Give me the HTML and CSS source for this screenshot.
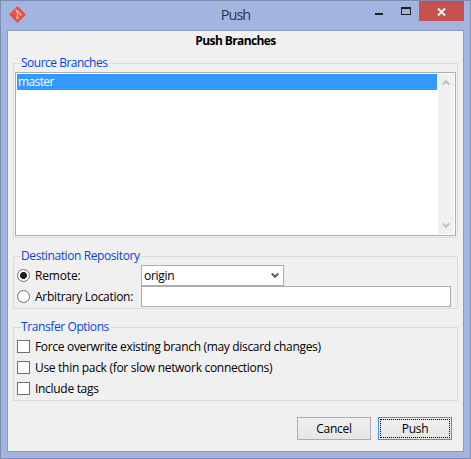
FILE: index.html
```html
<!DOCTYPE html>
<html lang="en">
<head>
<meta charset="utf-8">
<title>Push</title>
<link rel="stylesheet" href="styles.css">
</head>
<body>
<div class="window">
  <header class="titlebar">
    <svg class="logo" width="17" height="17" viewBox="0 0 17 17">
      <path d="M8.5 1 16 8.5 8.5 16 1 8.5Z" fill="#f05133" stroke="#f05133" stroke-width="1.4" stroke-linejoin="round"/>
      <path d="M6.3 3.2 8.4 5.3V12M8.6 5.5 11.2 8.2" fill="none" stroke="#d3bfd0" stroke-width="1.1"/>
      <circle cx="8.4" cy="5.5" r="1.2" fill="#d3bfd0"/><circle cx="8.4" cy="11.8" r="1.3" fill="#d3bfd0"/><circle cx="11.4" cy="8.5" r="1.2" fill="#d3bfd0"/>
    </svg>
    <h1 class="title">Push</h1>
    <div class="controls">
      <span class="minimize"></span>
      <span class="maximize"></span>
      <span class="close">
        <svg width="9" height="8" viewBox="0 0 9 8"><path d="M1 .5 8 7.5M8 .5 1 7.5" stroke="#fff" stroke-width="1.9"/></svg>
      </span>
    </div>
  </header>
  <main class="client">
    <h2 class="heading">Push Branches</h2>
    <section class="group branches">
      <span class="legend source-legend">Source Branches</span>
      <div class="listbox">
        <div class="list"><div class="selected">master</div></div>
        <div class="scrollbar">
          <svg width="8" height="7" viewBox="0 0 8 7"><path d="M.7 5.5 4 2.2 7.3 5.5" fill="none" stroke="#bfbfbf" stroke-width="2.2"/></svg>
          <svg width="8" height="7" viewBox="0 0 8 7"><path d="M.7 1.5 4 4.8 7.3 1.5" fill="none" stroke="#bfbfbf" stroke-width="2.2"/></svg>
        </div>
      </div>
    </section>
    <section class="group destination">
      <span class="legend dest-legend">Destination Repository</span>
      <div class="row">
        <span class="radio checked"></span><span class="label remote">Remote:</span>
        <div class="select"><span>origin</span><svg width="8" height="7" viewBox="0 0 8 7"><path d="M.7 1.5 4 4.8 7.3 1.5" fill="none" stroke="#606060" stroke-width="2.2"/></svg></div>
      </div>
      <div class="row">
        <span class="radio"></span><span class="label arbitrary">Arbitrary Location:</span>
        <div class="input"></div>
      </div>
    </section>
    <section class="group transfer">
      <span class="legend transfer-legend">Transfer Options</span>
      <div class="row"><span class="checkbox"></span><span class="label force">Force overwrite existing branch (may discard changes)</span></div>
      <div class="row"><span class="checkbox"></span><span class="label thin">Use thin pack (for slow network connections)</span></div>
      <div class="row"><span class="checkbox"></span><span class="label tags">Include tags</span></div>
    </section>
    <footer class="actions">
      <div class="button cancel">Cancel</div>
      <div class="button primary"><span class="focus">Push</span></div>
    </footer>
  </main>
</div>
</body>
</html>
```
FILE: styles.css
```css
* { box-sizing: border-box; }
body { margin: 0; font: 12px/16px "Open Sans", "Noto Sans", sans-serif; letter-spacing: -0.3px; color: #000; }
svg { display: block; flex: none; }
.window { width: 471px; height: 459px; border: 1px solid #7d8cb0; background: #a2b5e1; padding: 0 6px; display: flex; flex-direction: column; }
.titlebar { height: 29px; display: grid; grid-template-columns: 1fr auto 1fr; flex: none; }
.logo { margin: 5px 0 0 2px; }
.title { margin: 3px 0 0; font-size: 14.5px; line-height: 22px; font-weight: 400; letter-spacing: -1px; color: #33363f; }
.controls { display: flex; justify-content: flex-end; align-items: flex-start; }
.minimize { width: 8px; height: 2px; background: #202020; margin: 12px 18px 0 0; }
.maximize { width: 10px; height: 8px; border: 1px solid #202020; border-top-width: 2px; margin: 6px 8px 0 0; }
.close { width: 45px; height: 20px; background: #c75050; display: flex; align-items: center; justify-content: center; padding-top: 2px; }
.client { width: 457px; height: 422px; border: 1px solid #899bc3; background: #f0f0f0; padding: 2px 5px 0; flex: none; }
.heading { margin: 0; font-size: 12px; line-height: 16px; font-weight: 700; text-align: center; letter-spacing: -0.6px; }
.group { border: 1px solid #dcdcdc; position: relative; }
.legend { position: absolute; left: 7px; top: -9px; padding: 0 1px 0 0; background: #f0f0f0; color: #0646d6; white-space: nowrap; }
.source-legend { letter-spacing: -0.5px; }
.dest-legend, .transfer-legend { letter-spacing: -0.4px; }
.branches { margin-top: 14px; height: 175px; padding: 8px 1px 1px; }
.listbox { height: 164px; border: 1px solid #abadb3; background: #fff; padding: 1px; display: flex; justify-content: space-between; }
.list { width: 420px; }
.selected { height: 16px; background: #3399ff; color: #fff; line-height: 16px; letter-spacing: -0.6px; padding-left: 1px; }
.scrollbar { width: 16px; background: #f0f0f0; display: flex; flex-direction: column; justify-content: space-between; padding: 5px 4px; }
.destination { margin-top: 18px; height: 53px; padding: 8px 6px 0 3px; }
.transfer { margin-top: 18px; height: 74px; padding: 8px 3px 0; }
.row { height: 21px; display: flex; align-items: center; }
.radio { width: 13px; height: 13px; border: 1px solid #707070; border-radius: 50%; background: #fff; flex: none; }
.checked { background: radial-gradient(circle, #222 3.2px, #fff 3.8px); }
.checkbox { width: 13px; height: 13px; border: 1px solid #707070; background: #fff; flex: none; }
.label { margin-left: 5px; white-space: nowrap; }
.remote { letter-spacing: -0.15px; }
.force { letter-spacing: -0.32px; }
.destination .label { width: 106px; }
.select { width: 143px; height: 21px; border: 1px solid #abadb3; background: #fff; display: flex; align-items: center; justify-content: space-between; padding: 0 4px 0 2px; }
.input { flex: 1; height: 21px; border: 1px solid #abadb3; background: #fff; }
.actions { margin-top: 16px; padding-right: 6px; display: flex; justify-content: flex-end; gap: 7px; }
.button { width: 74px; height: 23px; border: 1px solid #acacac; background: linear-gradient(#f0f0f0, #e5e5e5); text-align: center; line-height: 21px; }
.primary { border-color: #3399ff; padding: 1px; }
.focus { display: block; height: 19px; line-height: 17px; border: 1px dotted #000; }
```
